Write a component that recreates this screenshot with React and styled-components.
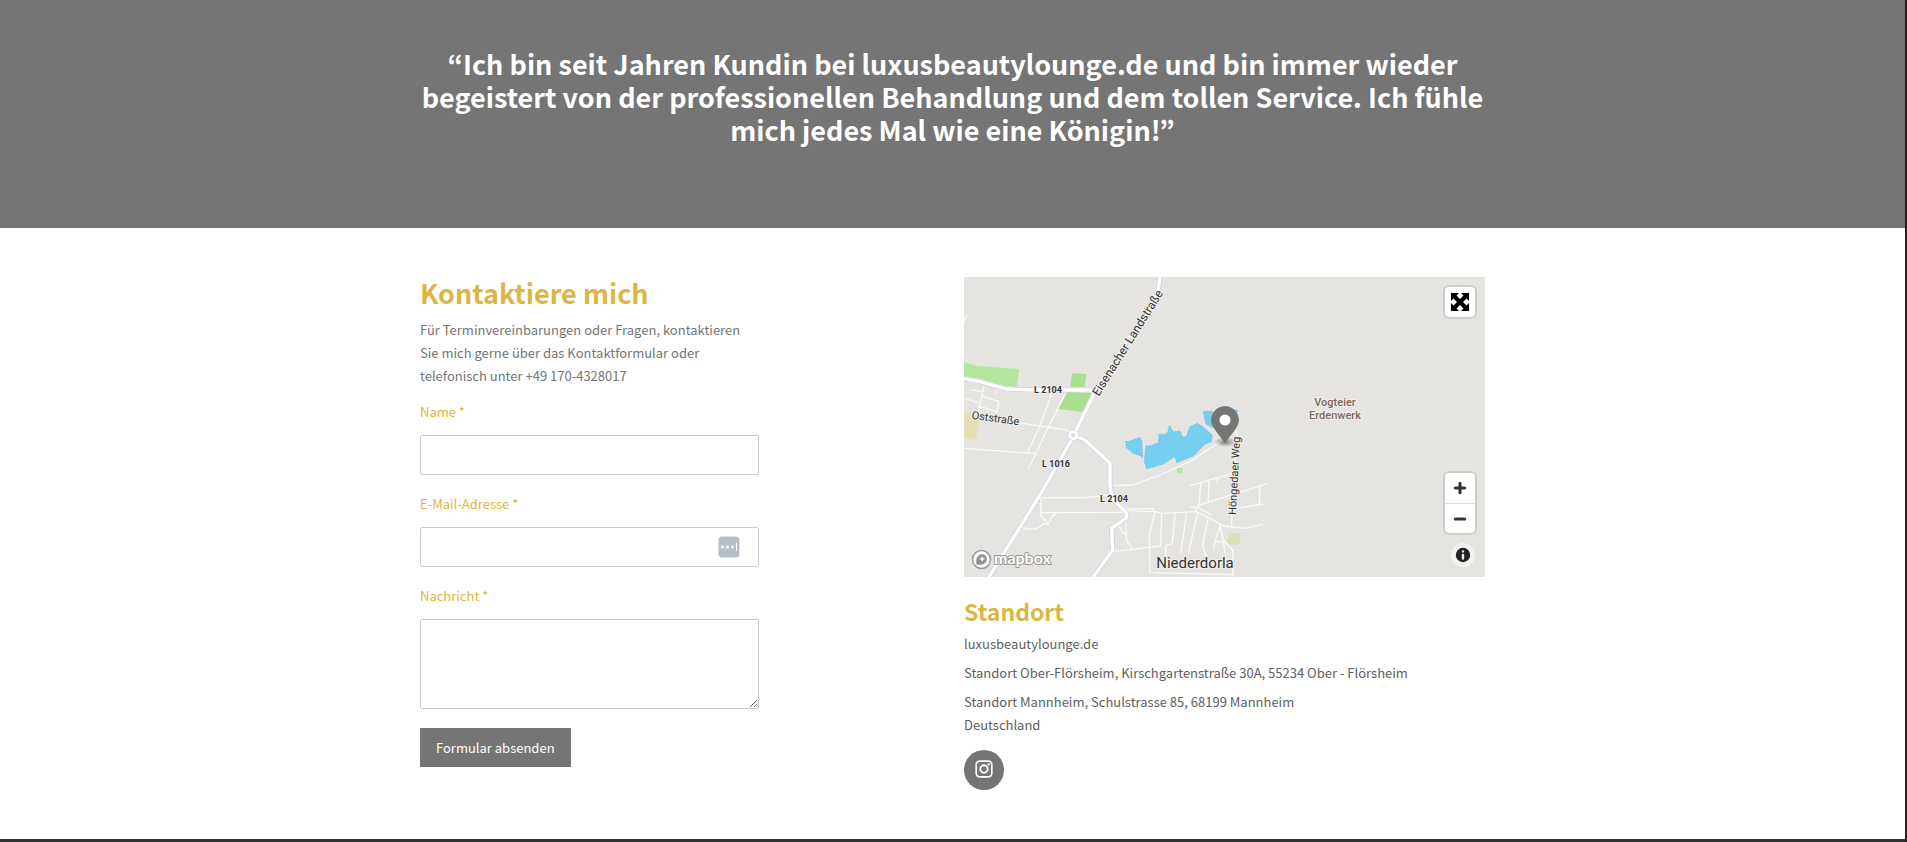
import React, { useState } from 'react'
import styled, { createGlobalStyle } from 'styled-components'


const GlobalStyle = createGlobalStyle`
* {
  box-sizing: border-box;
}

body {
  margin: 0;
  background: #fff;
  font-family: 'Noto Sans CJK KR', 'Noto Sans', sans-serif;
  font-size: 13px;
  line-height: 23px;
  color: #757575;
}

h2, h3, p {
  margin: 0;
}
`

const Page = styled.div`
min-height: 100vh;
display: flex;
flex-direction: column;
border-right: 2px solid #222;
`

const Quote = styled.section`
background: #757575;
padding: 47px 20px 82px;

h2 {
  max-width: 1065px;
  margin: 0 auto;
  color: #fff;
  font-size: 27px;
  line-height: 33px;
  font-weight: 700;
  text-align: center;
}
`

const Content = styled.main`
width: 100%;
max-width: 1065px;
margin: 0 auto;
padding: 49px 0;
display: grid;
grid-template-columns: 1fr 1fr;
gap: 23px;

@media screen and (max-width: 1100px) {
  padding: 49px 20px;
}
@media screen and (max-width: 768px) {
  grid-template-columns: 1fr;
}
`

const Footer = styled.footer`
flex: 1 0 3px;
background: #333;
`

const Title = styled.h2`
color: #dab743;
font-size: 27px;
line-height: 32px;
font-weight: 700;
`

const SubTitle = styled.h3`
margin-top: 18px;
color: #dab743;
font-size: 23px;
line-height: 32px;
font-weight: 700;
`

const Contact = styled.section`
width: 65%;

p {
  margin: 9px 0 13px;
}
@media screen and (max-width: 768px) {
  width: 100%;
}
`

const Form = styled.form`
display: flex;
flex-direction: column;
gap: 17px;
`

const Field = styled.div`
display: flex;
flex-direction: column;
gap: 12px;

label {
  color: #dab743;
}
`

const InputBox = styled.div`
position: relative;
display: flex;
`

const Input = styled.input`
width: 100%;
height: 40px;
padding: 8px 12px;
border: 1px solid #ccc;
border-radius: 2px;
background: #fff;
font: inherit;
color: #757575;
`

const TextArea = styled(Input).attrs({ as: 'textarea' })`
display: block;
height: 90px;
resize: both;
`

const FillButton = styled.button`
position: absolute;
top: 9px;
right: 19px;
width: 22px;
height: 22px;
padding: 0;
border: 0;
background: none;
cursor: pointer;

svg {
  display: block;
}
`

const Submit = styled.button`
align-self: flex-start;
margin-top: 2px;
padding: 8px 16px;
border: 0;
background: #757575;
color: #fff;
font: inherit;
cursor: pointer;
`

const MapBox = styled.div`
position: relative;
height: 300px;
overflow: hidden;
background: #e5e4e0;

.map {
  display: block;
  width: 100%;
  height: 100%;
}
`

const Controls = styled.div`
position: absolute;
top: 10px;
right: 10px;
bottom: 10px;
display: flex;
flex-direction: column;
align-items: flex-end;
gap: 10px;
`

const ControlGroup = styled.div`
margin-bottom: ${(props) => (props.$push ? 'auto' : '0')};
border-radius: 4px;
background: #fff;
box-shadow: 0 0 0 2px rgba(0, 0, 0, 0.1);
`

const ControlButton = styled.button`
width: 30px;
height: 30px;
padding: 0;
display: flex;
align-items: center;
justify-content: center;
border: 0;
background: none;
color: #000;
cursor: pointer;

& + & {
  border-top: 1px solid #ddd;
}
`

const InfoButton = styled(ControlButton)`
width: 24px;
height: 24px;
border-radius: 12px;
background: rgba(255, 255, 255, 0.5);
`

const Address = styled.address`
margin-top: 5px;
display: flex;
flex-direction: column;
gap: 6px;
font-style: normal;
color: #606060;
`

const Social = styled.a`
width: 40px;
height: 40px;
margin-top: 14px;
padding-bottom: 3px;
display: flex;
align-items: center;
justify-content: center;
border-radius: 50%;
background: #757575;
color: #fff;
`

// small streets, drawn three times larger than the map
const streets = [
  'M448 626L508 624L588 594L678 554L738 514L778 489',
  'M228 662H358L438 654',
  'M231 662L230 714L253 741L238 741Q220 757 203 757L173 751',
  'M233 707L478 706M253 741L263 719L278 709',
  'M483 695H568L566 704',
  'M488 701L573 704L593 709L695 704L700 691H678',
  'M695 704L733 721L778 747L807 750L842 754L897 742',
  'M700 691L743 714M705 684L710 619M733 674L735 611M760 602V617',
  'M678 626L806 589',
  'M700 687L768 664L913 619',
  'M888 627L886 681M818 694L898 681',
  'M818 459V500L803 709V749',
  'M768 744L778 789L806 819L808 899',
  'M573 704L556 774L558 887L808 893',
  'M593 709L590 807L506 817L448 823',
  'M466 749L478 769L488 771M485 734L488 791L506 819',
  'M633 709L625 799L606 806L603 859',
  'M668 709L650 829M700 709L673 831',
  'M733 721L716 804L728 844',
  'M768 747L753 794H778L784 829M753 794L748 816',
  'M0 514L216 530',
  'M263 349L228 447L191 526M306 347L250 457L193 577',
  'M36 425L158 436L308 459L330 475',
  'M23 339L56 344M60 327L43 404M98 339L96 351M56 357L105 374L98 409M0 364L43 377M43 387L98 404',
  'M8 114L0 134',
]

const mainRoads = [
  'M588 -6L583 40C570 90 520 140 488 194L388 354L338 457L330 475L228 654L73 903',
  'M-4 304L48 314L128 336L213 339H378L398 351',
  'M330 475L363 489L438 559V624Q440 654 453 674L488 708Q490 720 483 726L443 754L446 819L384 905',
]

const MapDrawing = () => (
  <svg className='map' viewBox='0 0 521 300' preserveAspectRatio='xMidYMid slice' role='img' aria-label='Karte Niederdorla'>
    <rect width='521' height='300' fill='#e5e4e0' />
    <g transform='scale(0.33333)' fill='none' strokeLinejoin='round'>
      <g fill='#b3e59b'>
        <path d='M0 256L38 267L166 276L158 329L108 326L50 305L0 297Z' />
        <path d='M324 288L367 291L362 331L319 329ZM306 344L390 349L363 406L281 395Z' fill='#a9e08f' />
        <path d='M639 573H655V588H639ZM219 664H229V675H219Z' />
      </g>
      <path d='M0 409L50 414L36 489L0 482Z' fill='#e6deb5' />
      <path d='M795 767L828 769V796L821 804L788 802L790 789Z' fill='#d9e0b8' />
      <g stroke='#fafaf8' strokeWidth='4'>
        {streets.map((d) => <path key={d} d={d} />)}
      </g>
      <g fill='#75cff0' stroke='#5fb0ea' strokeWidth='2' strokeDasharray='5 4'>
        <path d='M485 494L498 492L528 481L533 489L534 506L536 542L524 534L508 529L498 520L488 514Z' />
        <path d='M545 507L560 506L583 497L585 471L598 473L610 469L616 445L628 464L648 462L656 481L668 477L678 449L700 439L718 451L728 459L745 474L743 494L723 501L688 537L638 557L633 539L598 561L548 576L541 554Z' />
        <path d='M718 404L743 402L745 410L760 398L800 396L822 400L800 440L745 452L725 440Z' />
      </g>
      <g stroke='#d3d3e4' strokeWidth='15'>
        {mainRoads.map((d) => <path key={d} d={d} />)}
      </g>
      <g stroke='#fff' strokeWidth='10'>
        {mainRoads.map((d) => <path key={d} d={d} />)}
      </g>
      <circle cx='328' cy='475' r='11' fill='#e5e4e0' stroke='#d3d3e4' strokeWidth='12' />
      <circle cx='328' cy='475' r='11' fill='#e0dfe4' stroke='#fff' strokeWidth='8' />
      <rect x='94' y='527' width='10' height='5' fill='#fff' stroke='#d3d3e4' strokeWidth='2' />
    </g>
    <g fontFamily='Roboto, sans-serif' fill='#333' stroke='#f1f0ee' strokeWidth='2' paintOrder='stroke' textAnchor='middle'>
      <g fontSize='9' fontWeight='700'>
        <text x='84' y='116'>L 2104</text>
        <text x='92' y='190'>L 1016</text>
        <text x='150' y='225'>L 2104</text>
      </g>
      <text fontSize='12' transform='translate(167 68) rotate(-58)'>Eisenacher Landstraße</text>
      <text fontSize='11' transform='translate(31 145) rotate(8)'>Oststraße</text>
      <text fontSize='11' transform='translate(274 199) rotate(-87)'>Höngedaer Weg</text>
      <text fontSize='15' x='231' y='291'>Niederdorla</text>
      <g fontSize='11' fontWeight='500' fill='#7d6957'>
        <text x='371' y='129'>Vogteier</text>
        <text x='371' y='142'>Erdenwerk</text>
      </g>
    </g>
    <defs>
      <radialGradient id='pinShadow'>
        <stop offset='0' stopOpacity='0.45' />
        <stop offset='1' stopOpacity='0' />
      </radialGradient>
    </defs>
    <ellipse cx='261' cy='165' rx='11' ry='5' fill='url(#pinShadow)' />
    <path d='M261 129.500C253.500 129.500 247.500 135.500 247.500 143C247.500 150 255 157 261 165.500C267 157 274.500 150 274.500 143C274.500 135.500 268.500 129.500 261 129.500Z' fill='#757575' stroke='#666' strokeWidth='0.600' />
    <circle cx='261' cy='143' r='5.500' fill='#fff' />
    <g>
      <circle cx='17.500' cy='282.500' r='9' fill='#fff' stroke='#999' strokeWidth='1.500' />
      <path d='M12.500 287.500C11.500 282 13 278 17.500 277.200C21 277 23.200 279.500 22.800 282.500C22 287 18 288.500 12.500 287.500Z' fill='#8f8f8f' />
      <path d='M18.200 279L19.200 281L21.200 282L19.200 283L18.200 285L17.200 283L15.200 282L17.200 281Z' fill='#fff' />
      <text x='30' y='287' fontFamily='Lato, sans-serif' fontSize='16' fontWeight='700' fill='#fff' stroke='#999' strokeWidth='2' strokeLinejoin='round' paintOrder='stroke'>mapbox</text>
    </g>
  </svg>
)

function Standort() {
  return (
    <section>
      <MapBox>
        <MapDrawing />
        <Controls>
          <ControlGroup $push>
            <ControlButton type='button' aria-label='Vollbild'>
              <svg width='18' height='18' viewBox='0 0 18 18' fill='currentColor'>
                <path d='M0 0H8L5.500 2.500L9 6L12.500 2.500L10 0H18V8L15.500 5.500L12 9L15.500 12.500L18 10V18H10L12.500 15.500L9 12L5.500 15.500L8 18H0V10L2.500 12.500L6 9L2.500 5.500L0 8Z' />
              </svg>
            </ControlButton>
          </ControlGroup>
          <ControlGroup>
            <ControlButton type='button' aria-label='Vergrößern'>
              <svg width='30' height='30' viewBox='0 0 29 29' fill='#333'>
                <path d='M14.5 8.5c-.75 0-1.5.75-1.5 1.500v3h-3c-.75 0-1.500.75-1.500 1.500S9.250 16 10 16h3v3c0 .75.75 1.500 1.500 1.500S16 19.750 16 19v-3h3c.75 0 1.500-.75 1.500-1.500S19.750 13 19 13h-3v-3c0-.75-.75-1.500-1.500-1.500z' />
              </svg>
            </ControlButton>
            <ControlButton type='button' aria-label='Verkleinern'>
              <svg width='30' height='30' viewBox='0 0 29 29' fill='#333'>
                <path d='M10 13c-.75 0-1.500.75-1.500 1.500S9.250 16 10 16h9c.75 0 1.500-.75 1.500-1.500S19.750 13 19 13h-9z' />
              </svg>
            </ControlButton>
          </ControlGroup>
          <InfoButton type='button' aria-label='Info'>
            <svg width='24' height='24' viewBox='0 0 20 20' fill='#222' fillRule='evenodd'>
              <path d='M4 10a6 6 0 1 0 12 0 6 6 0 1 0-12 0m5-3a1 1 0 1 0 2 0 1 1 0 1 0-2 0m0 3a1 1 0 1 1 2 0v3a1 1 0 1 1-2 0' />
            </svg>
          </InfoButton>
        </Controls>
      </MapBox>

      <SubTitle>Standort</SubTitle>
      <Address>
        <div>luxusbeautylounge.de</div>
        <div>Standort Ober-Flörsheim, Kirschgartenstraße 30A, 55234 Ober - Flörsheim</div>
        <div>Standort Mannheim, Schulstrasse 85, 68199 Mannheim<br />Deutschland</div>
      </Address>
      <Social href='#instagram' aria-label='Instagram'>
        <svg width='18' height='18' viewBox='0 0 18 18' fill='none' stroke='currentColor' strokeWidth='1.700'>
          <rect x='1.200' y='1.200' width='15.600' height='15.600' rx='3.500' />
          <circle cx='9' cy='9' r='3.700' strokeWidth='2' />
          <circle cx='13.600' cy='4.400' r='1.200' fill='currentColor' stroke='none' />
        </svg>
      </Social>
    </section>
  )
}

function Kontakt() {
  const [values, setValues] = useState({ name: '', email: '', message: '' })

  const handleChange = (e) => { setValues({ ...values, [e.target.name]: e.target.value }) }

  return (
    <Contact>
      <Title>Kontaktiere mich</Title>
      <p>Für Terminvereinbarungen oder Fragen, kontaktieren Sie mich gerne über das Kontaktformular oder telefonisch unter +49 170-4328017</p>
      <Form onSubmit={(e) => e.preventDefault()}>
        <Field>
          <label htmlFor='name'>Name *</label>
          <Input id='name' name='name' value={values.name} onChange={handleChange} required />
        </Field>
        <Field>
          <label htmlFor='email'>E-Mail-Adresse *</label>
          <InputBox>
            <Input id='email' name='email' type='email' value={values.email} onChange={handleChange} required />
            <FillButton type='button' aria-label='Ausfüllen'>
              <svg width='22' height='22' viewBox='0 0 22 22'>
                <rect x='0.500' y='0.500' width='21' height='21' rx='3.500' fill='#b7bfcb' />
                <g fill='#fff'>
                  <circle cx='4.500' cy='11' r='1.500' />
                  <circle cx='9.500' cy='11' r='1.500' />
                  <circle cx='14.500' cy='11' r='1.500' />
                  <rect x='18' y='7' width='1' height='8' />
                </g>
              </svg>
            </FillButton>
          </InputBox>
        </Field>
        <Field>
          <label htmlFor='message'>Nachricht *</label>
          <TextArea id='message' name='message' value={values.message} onChange={handleChange} required />
        </Field>
        <Submit type='submit'>Formular absenden</Submit>
      </Form>
    </Contact>
  )
}

function App() {
  return (
    <Page>
      <GlobalStyle />
      <Quote>
        <h2>“Ich bin seit Jahren Kundin bei luxusbeautylounge.de und bin immer wieder begeistert von der professionellen Behandlung und dem tollen Service. Ich fühle mich jedes Mal wie eine Königin!”</h2>
      </Quote>
      <Content>
        <Kontakt />
        <Standort />
      </Content>
      <Footer />
    </Page>
  )
}

export default App;
